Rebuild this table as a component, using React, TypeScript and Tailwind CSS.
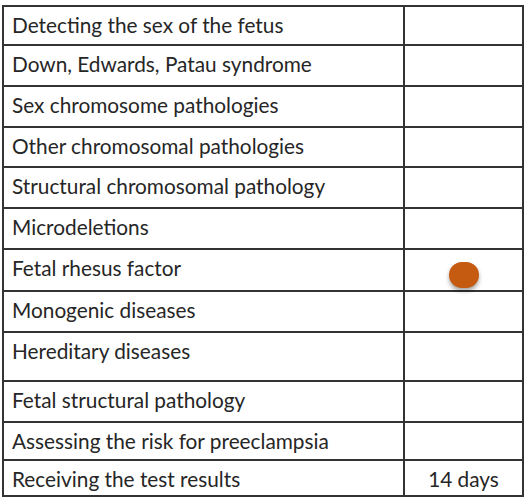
import React from "react";

const L = [6, 46, 87, 128, 168, 209, 250, 292, 333, 382, 423, 461, 497];
const rows: { label: string; right?: "dot" | string }[] = [
  { label: "Detecting the sex of the fetus" },
  { label: "Down, Edwards, Patau syndrome" },
  { label: "Sex chromosome pathologies" },
  { label: "Other chromosomal pathologies" },
  { label: "Structural chromosomal pathology" },
  { label: "Microdeletions" },
  { label: "Fetal rhesus factor", right: "dot" },
  { label: "Monogenic diseases" },
  { label: "Hereditary diseases" },
  { label: "Fetal structural pathology" },
  { label: "Assessing the risk for preeclampsia" },
  { label: "Receiving the test results", right: "14 days" },
];

export default function App() {
  return (
    <div className="w-[527px] h-[502px] bg-white overflow-hidden" style={{ fontFamily: "Lato, 'Open Sans', sans-serif" }}>
      <div className="ml-[2px] mt-[5px] w-[522px] border-2 border-[#333] flex flex-col">
        {rows.map((r, i) => {
          const last = i === rows.length - 1;
          const h = last ? L[i + 1] - L[i] - 2 : L[i + 1] - L[i] - (i === 0 ? 1 : 0);
          return (
            <div
              key={i}
              className={`flex ${last ? "" : "border-b-2 border-[#333]"}`}
              style={{ height: h }}
            >
              <div className="w-[401px] border-r-2 border-[#333] pl-[8px] pt-[6px] text-[20.8px] leading-[24px] text-[#262626] whitespace-nowrap">
                {r.label}
              </div>
              <div className="flex-1 flex items-start justify-center pt-[6px] text-[20.8px] leading-[24px] text-[#262626]">
                {r.right === "dot" ? (
                  <div className="mt-[6px] w-[30px] h-[26px] rounded-full bg-[#c55a11] shadow-[0_3px_4px_rgba(0,0,0,0.35)]" />
                ) : (
                  r.right
                )}
              </div>
            </div>
          );
        })}
      </div>
    </div>
  );
}
